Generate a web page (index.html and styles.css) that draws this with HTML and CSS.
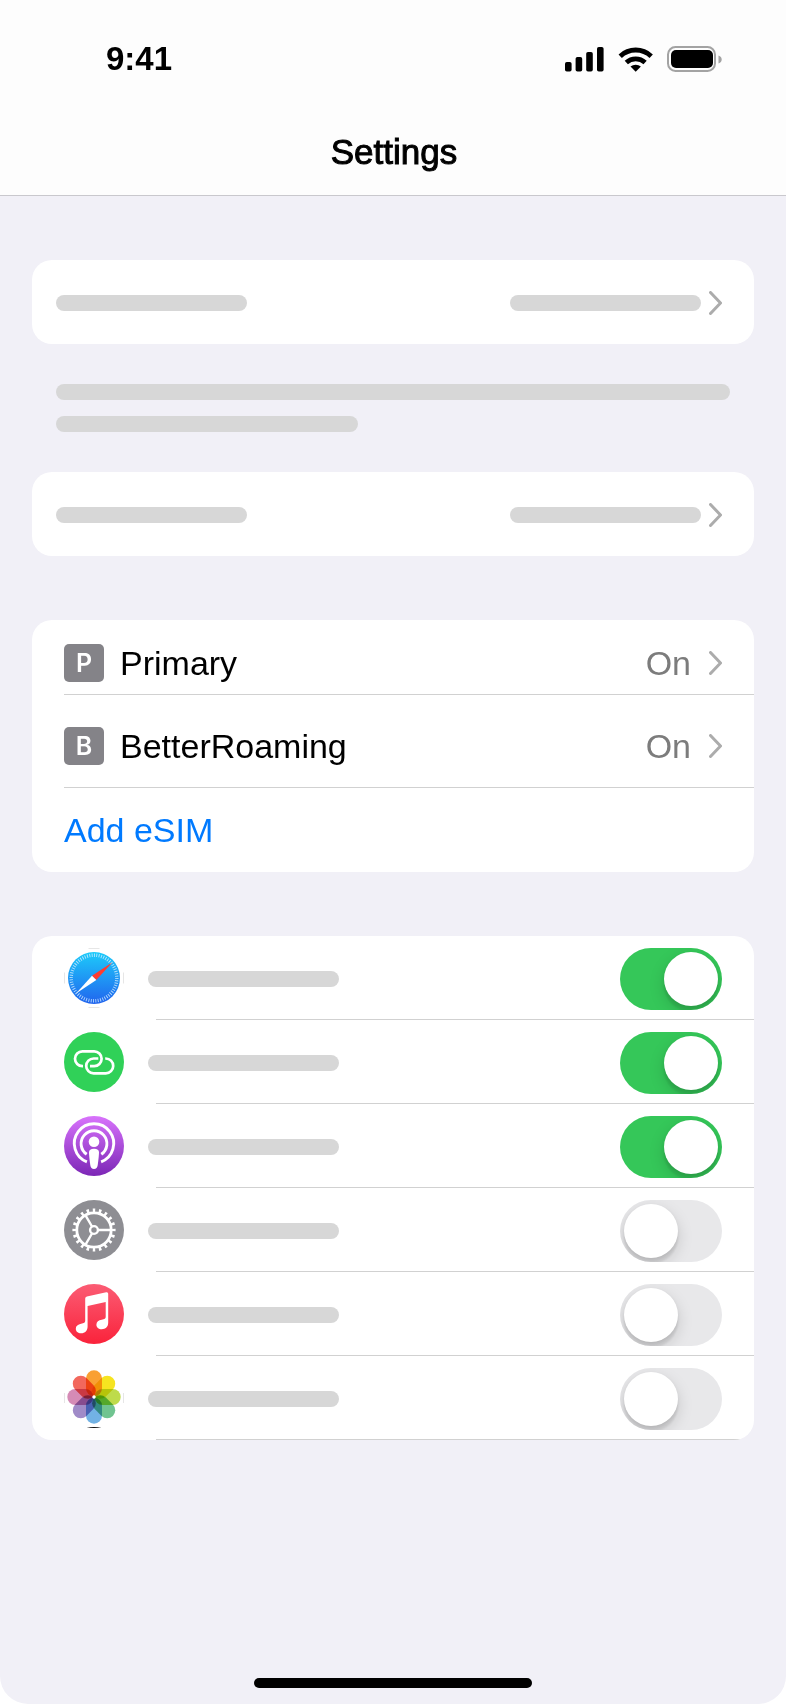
FILE: index.html
```html
<!DOCTYPE html>
<html lang="en">
<head>
<meta charset="utf-8">
<meta name="viewport" content="width=device-width, initial-scale=1">
<title>Settings</title>
<link rel="stylesheet" href="styles.css">
</head>
<body>
<div class="screen">
  <header class="header">
    <div class="status">
      <span class="clock">9:41</span>
      <svg class="status-icons" width="158" height="28" viewBox="0 0 158 28" aria-hidden="true">
        <rect x="0" y="17" width="6.6" height="9.6" rx="1.8"/>
        <rect x="10.6" y="12" width="6.6" height="14.6" rx="1.8"/>
        <rect x="21.2" y="7" width="6.6" height="19.6" rx="1.8"/>
        <rect x="32" y="2" width="6.6" height="24.6" rx="1.8"/>
        <path d="M70.700 26.800l-5.200-5.200a8 8 0 0 1 10.400 0z"/>
        <path d="M61.300 17.500a14 14 0 0 1 18.800 0" fill="none" stroke="#000" stroke-width="4.800"/>
        <path d="M55.200 11.200a22.500 22.500 0 0 1 31 0" fill="none" stroke="#000" stroke-width="4.800"/>
        <rect x="103" y="2" width="47" height="24" rx="7.500" fill="none" stroke="#a3a3a3" stroke-width="2"/>
        <rect x="106" y="5" width="42" height="18" rx="5"/>
        <path d="M153.500 10.500q3.200 1.200 3.200 4t-3.200 4z" fill="#a3a3a3"/>
      </svg>
    </div>
    <h1 class="title">Settings</h1>
  </header>

  <main class="content">
    <a class="card summary" href="#" aria-label="Open">
      <span class="bar"></span>
      <span class="bar push"></span>
      <svg class="chevron" viewBox="0 0 13 24"><path d="M1.500 1.500L11.500 12 1.500 22.500"/></svg>
    </a>

    <div class="note">
      <span class="bar full"></span>
      <span class="bar part"></span>
    </div>

    <a class="card summary" href="#" aria-label="Open">
      <span class="bar"></span>
      <span class="bar push"></span>
      <svg class="chevron" viewBox="0 0 13 24"><path d="M1.500 1.500L11.500 12 1.500 22.500"/></svg>
    </a>

    <section class="card sims">
      <a class="sim primary" href="#">
        <span class="badge">P</span>
        <span>Primary</span>
        <span class="value">On</span>
        <svg class="chevron" viewBox="0 0 13 24"><path d="M1.500 1.500L11.500 12 1.500 22.500"/></svg>
      </a>
      <a class="sim secondary" href="#">
        <span class="badge">B</span>
        <span>BetterRoaming</span>
        <span class="value">On</span>
        <svg class="chevron" viewBox="0 0 13 24"><path d="M1.500 1.500L11.500 12 1.500 22.500"/></svg>
      </a>
      <button class="sim add" type="button">Add eSIM</button>
    </section>

    <section class="card apps">
      <label class="app">
        <svg class="icon" viewBox="0 0 60 60">
          <defs><linearGradient id="safari" x2="0" y2="1"><stop stop-color="#1dcbfa"/><stop offset="1" stop-color="#2164ee"/></linearGradient></defs>
          <path d="M24.500 .5h11M24.500 59.500h11M.5 24.500v11M59.500 24.500v11" stroke="#e6e6e6"/>
          <circle cx="30" cy="30" r="26" fill="url(#safari)"/>
          <circle cx="30" cy="30" r="22.800" fill="none" stroke="#d4efff" stroke-width="3.400" stroke-dasharray=".8 1.200" pathLength="120" opacity=".8"/>
          <path d="M48.500 14.200L28 27.700l4.300 4.300z" fill="#ff3b30"/>
          <path d="M12 45.500L28 27.700l4.300 4.300z" fill="#fff"/>
        </svg>
        <span class="bar"></span>
        <input class="toggle" type="checkbox" role="switch" aria-label="Safari" checked>
      </label>
      <label class="app">
        <svg class="icon" viewBox="0 0 60 60">
          <circle cx="30" cy="30" r="30" fill="#30d158"/>
          <g fill="none" stroke="#fff" stroke-width="2.700">
            <path d="M19 34.100h-.6a7.400 7.400 0 0 1 0-14.800h11.800a7.400 7.400 0 0 1 0 14.800h-4.200"/>
            <path d="M41.200 26.500h.6a7.400 7.400 0 0 1 0 14.800h-12.200a7.400 7.400 0 0 1 0-14.800h4.700"/>
          </g>
        </svg>
        <span class="bar"></span>
        <input class="toggle" type="checkbox" role="switch" aria-label="Links" checked>
      </label>
      <label class="app">
        <svg class="icon" viewBox="0 0 60 60">
          <defs><linearGradient id="pod" x2="0" y2="1"><stop stop-color="#d873fc"/><stop offset="1" stop-color="#7c27b6"/></linearGradient></defs>
          <circle cx="30" cy="30" r="30" fill="url(#pod)"/>
          <g fill="none" stroke="#fff" stroke-width="2.900">
            <path d="M22.900 45.900A19.700 19.700 0 1 1 37.100 45.900"/>
            <path d="M22.700 38.300A12.900 12.900 0 1 1 37.300 38.300"/>
          </g>
          <circle cx="30" cy="25.800" r="5.300" fill="#fff"/>
          <path d="M25 36.300q0-3.500 5-3.500t5 3.500q0 3.500-1.300 13-.5 3.700-3.700 3.700t-3.700-3.700Q25 39.800 25 36.300z" fill="#fff"/>
        </svg>
        <span class="bar"></span>
        <input class="toggle" type="checkbox" role="switch" aria-label="Podcasts" checked>
      </label>
      <label class="app">
        <svg class="icon" viewBox="0 0 60 60">
          <circle cx="30" cy="30" r="30" fill="#8e8e93"/>
          <g fill="none" stroke="#fff">
            <circle cx="30" cy="30" r="17.200" stroke-width="2.800"/>
            <circle cx="30" cy="30" r="19.700" stroke-width="3.800" stroke-dasharray=".8 1.200" stroke-dashoffset=".4" pathLength="40"/>
            <circle cx="30" cy="30" r="3.900" stroke-width="2.400"/>
            <path d="M34 30h13M28 26.500l-6.500-11.200M28 33.500l-6.500 11.200" stroke-width="2.400"/>
          </g>
        </svg>
        <span class="bar"></span>
        <input class="toggle" type="checkbox" role="switch" aria-label="General">
      </label>
      <label class="app">
        <svg class="icon" viewBox="0 0 60 60">
          <defs><linearGradient id="music" x2="0" y2="1"><stop stop-color="#fb5c74"/><stop offset="1" stop-color="#fa233b"/></linearGradient></defs>
          <circle cx="30" cy="30" r="30" fill="url(#music)"/>
          <path d="M21.200 14.500q0-1.700 1.700-2.100l19.300-4.200q2-.4 2 1.500v28.800c0 4.500-2.700 6.700-6.500 6.700-3.200 0-5.300-1.900-5.300-4.500 0-3 2.200-4.500 5.300-5 2.900-.5 4-.9 4-3V18L23.600 22v20.500c0 4.200-2.600 6.800-6.500 6.800-3.200 0-5.300-1.900-5.300-4.600 0-2.900 2.100-4.400 5.300-5 2.900-.5 4.100-1 4.100-3z" fill="#fff"/>
        </svg>
        <span class="bar"></span>
        <input class="toggle" type="checkbox" role="switch" aria-label="Music">
      </label>
      <label class="app">
        <svg class="icon" viewBox="0 0 60 60">
          <path d="M.5 25v10M59.500 25v10" stroke="#e6e6e6"/>
          <path d="M22.500 58.900h15q-7.500 2-15 0z" fill="#111"/>
          <g class="petals">
            <rect x="22" y="2.300" width="16" height="26" rx="8" fill="#f9a033"/>
            <rect x="22" y="2.300" width="16" height="26" rx="8" fill="#f6e420" transform="rotate(45 30 29)"/>
            <rect x="22" y="2.300" width="16" height="26" rx="8" fill="#bedb4b" transform="rotate(90 30 29)"/>
            <rect x="22" y="2.300" width="16" height="26" rx="8" fill="#70c490" transform="rotate(135 30 29)"/>
            <rect x="22" y="2.300" width="16" height="26" rx="8" fill="#72b2e4" transform="rotate(180 30 29)"/>
            <rect x="22" y="2.300" width="16" height="26" rx="8" fill="#a08bc8" transform="rotate(225 30 29)"/>
            <rect x="22" y="2.300" width="16" height="26" rx="8" fill="#d58bb6" transform="rotate(270 30 29)"/>
            <rect x="22" y="2.300" width="16" height="26" rx="8" fill="#f2685d" transform="rotate(315 30 29)"/>
          </g>
          <circle cx="30" cy="29" r="1.700" fill="#fff"/>
        </svg>
        <span class="bar"></span>
        <input class="toggle" type="checkbox" role="switch" aria-label="Photos">
      </label>
    </section>
  </main>

  <footer class="footer"><span class="home"></span></footer>
</div>
</body>
</html>
```
FILE: styles.css
```css
* {
  box-sizing: border-box;
}

body {
  margin: 0;
  background: #fff;
  color: #000;
  font-family: "Liberation Sans", Arial, sans-serif;
  font-size: 34px;
  line-height: 40px;
}

a {
  color: inherit;
  text-decoration: none;
}

.screen {
  display: flex;
  flex-direction: column;
  min-height: 100vh;
  background: #f1f0f7;
  border-radius: 0 0 28px 28px;
}

.header {
  background: #fdfdfd;
  border-bottom: 1px solid #c9c8cd;
}

.status {
  display: flex;
  align-items: center;
  justify-content: space-between;
  height: 108px;
  padding: 10px 63px 0 106px;
}

.clock {
  font-size: 33px;
  font-weight: 700;
}

.title {
  display: flex;
  align-items: center;
  justify-content: center;
  height: 87px;
  margin: 0;
  padding-left: 2px;
  font-size: 35px;
  font-weight: 400;
  -webkit-text-stroke: 1px #000;
}

.content {
  display: flex;
  flex-direction: column;
  padding: 64px 32px;
}

.card {
  overflow: hidden;
  background: #fff;
  border-radius: 20px;
}

.bar {
  width: 191px;
  height: 16px;
  background: #d7d7d7;
  border-radius: 8px;
}

.chevron {
  flex: none;
  width: 13px;
  height: 24px;
  fill: none;
  stroke: #acacac;
  stroke-width: 3;
  stroke-linecap: round;
  stroke-linejoin: round;
}

.summary {
  display: flex;
  align-items: center;
  gap: 8px;
  height: 84px;
  padding: 2px 32px 0 24px;
}

.push {
  margin-left: auto;
}

.note {
  display: flex;
  flex-direction: column;
  gap: 16px;
  padding: 40px 24px;
}

.full {
  width: 100%;
}

.part {
  width: 302px;
}

.sims,
.apps {
  margin-top: 64px;
}

.sim {
  display: flex;
  align-items: center;
  gap: 16px;
  padding: 0 32px;
  background: linear-gradient(#d1d1d1, #d1d1d1) no-repeat right bottom / calc(100% - 32px) 1px;
}

.primary {
  height: 75px;
  padding-top: 11px;
}

.secondary {
  height: 93px;
  padding-top: 9px;
}

.add {
  width: 100%;
  height: 84px;
  border: 0;
  background: none;
  color: #007aff;
  font: inherit;
}

.badge {
  display: flex;
  align-items: center;
  justify-content: center;
  width: 40px;
  height: 38px;
  background: #848388;
  border-radius: 5px;
  color: #fff;
  font-family: Inter, sans-serif;
  font-size: 25px;
  font-weight: 600;
}

.value {
  margin-left: auto;
  padding-right: 2px;
  color: #7c7c7c;
}

.app {
  display: flex;
  align-items: center;
  gap: 24px;
  padding: 12px 32px 10px;
  background: linear-gradient(#d1d1d1, #d1d1d1) no-repeat right bottom / calc(100% - 124px) 1px;
}

.icon {
  flex: none;
  align-self: flex-start;
  width: 60px;
  height: 60px;
}

.petals rect {
  mix-blend-mode: multiply;
}

.toggle {
  appearance: none;
  overflow: hidden;
  width: 102px;
  height: 62px;
  margin: 0 0 0 auto;
  padding: 4px;
  background: #e8e8ea;
  border-radius: 31px;
}

.toggle::before {
  content: "";
  display: block;
  width: 54px;
  height: 54px;
  background: #fff;
  border-radius: 50%;
  box-shadow: 0 6px 16px rgba(0, 0, 0, 0.15), 0 6px 2px rgba(0, 0, 0, 0.06), 0 2px 4px rgba(0, 0, 0, 0.06);
}

.toggle:checked {
  background: #35c759;
}

.toggle:checked::before {
  margin-left: 40px;
}

.footer {
  display: flex;
  justify-content: center;
  margin-top: auto;
  padding-bottom: 16px;
}

.home {
  width: 278px;
  height: 10px;
  background: #000;
  border-radius: 5px;
}
```
